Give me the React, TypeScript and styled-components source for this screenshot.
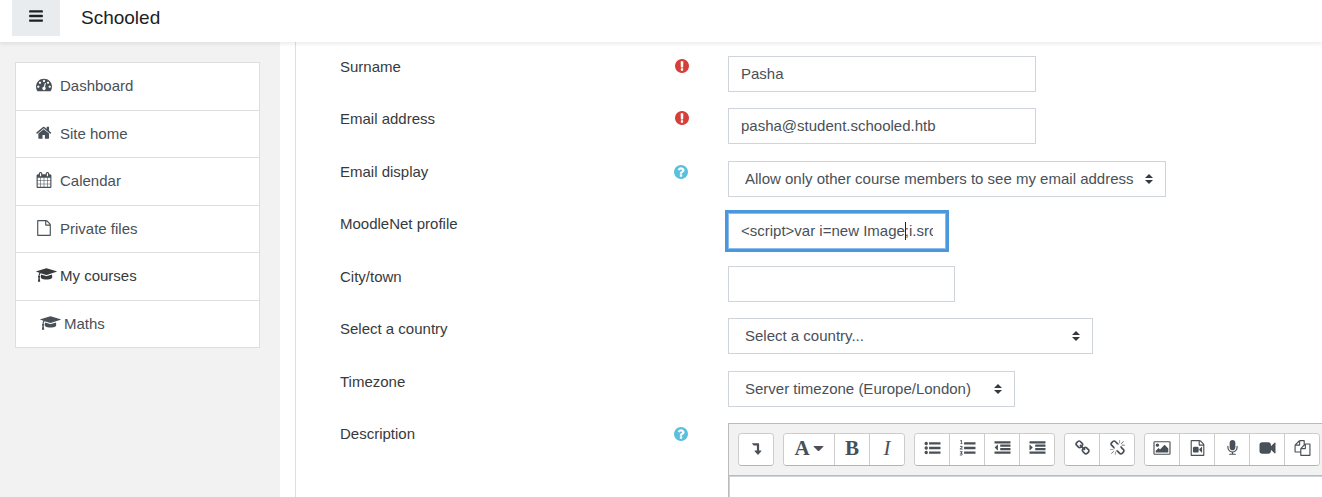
import React from "react";
import styled, { createGlobalStyle } from "styled-components";

const GlobalStyle = createGlobalStyle`
  *, *::before, *::after { box-sizing: border-box; }
  body {
    margin: 0;
    background: #fff;
    color: #373a3c;
    font: 15px/22px "Liberation Sans", Arial, sans-serif;
  }
  button, input, select, textarea { font: inherit; }
`;

/* ---------- icons ---------- */

const FILE_OUTLINE =
  "M1596 380q28 28 48 76t20 88v1152q0 40-28 68t-68 28h-1344q-40 0-68-28t-28-68v-1600q0-40 28-68t68-28h896q40 0 88 20t76 48zm-444-244v376h376q-10-29-22-41l-313-313q-12-12-41-22zm384 1528v-1024h-416q-40 0-68-28t-28-68v-416h-768v1536h1280z";
const LONG_BAR = "v192q0 13-9.5 22.5t-22.5 9.5h-1728q-13 0-22.5-9.5t-9.5-22.5v-192q0-13 9.5-22.5t22.5-9.5h1728q13 0 22.5 9.5t9.5 22.5z";
const SHORT_BAR = "v192q0 13-9.5 22.5t-22.5 9.5h-1088q-13 0-22.5-9.5t-9.5-22.5v-192q0-13 9.5-22.5t22.5-9.5h1088q13 0 22.5 9.5t9.5 22.5z";
const LIST_BAR = "v192q0 13-9.5 22.5t-22.5 9.5h-1216q-13 0-22.5-9.5t-9.5-22.5v-192q0-13 9.5-22.5t22.5-9.5h1216q13 0 22.5 9.5t9.5 22.5z";
const DENT_BARS = `M1792 1312${LONG_BAR}M1792 928${SHORT_BAR}M1792 544${SHORT_BAR}M1792 160${LONG_BAR}`;
const LIST_BARS = `M1792 1312${LIST_BAR}M1792 800${LIST_BAR}M1792 288${LIST_BAR}`;

const icons = {
  bars: {
    box: "128 0 1536 1792",
    d: "M1664 1344v128q0 26-19 45t-45 19h-1408q-26 0-45-19t-19-45v-128q0-26 19-45t45-19h1408q26 0 45 19t19 45zm0-512v128q0 26-19 45t-45 19h-1408q-26 0-45-19t-19-45v-128q0-26 19-45t45-19h1408q26 0 45 19t19 45zm0-512v128q0 26-19 45t-45 19h-1408q-26 0-45-19t-19-45v-128q0-26 19-45t45-19h1408q26 0 45 19t19 45z",
  },
  dashboard: {
    box: "0 64 1792 1792",
    d: "M384 1152q0-53-37.5-90.5t-90.5-37.5-90.5 37.5-37.5 90.5 37.5 90.5 90.5 37.5 90.5-37.5 37.5-90.5zm192-448q0-53-37.5-90.5t-90.5-37.5-90.5 37.5-37.5 90.5 37.5 90.5 90.5 37.5 90.5-37.5 37.5-90.5zm428 481l101-382q6-26-7.5-48.5t-38.5-29.5-48 6.5-30 39.5l-101 382q-60 5-107 43.5t-63 98.5q-20 77 20 146t117 89 146-20 89-117q16-60-6-117t-72-91zm660-33q0-53-37.5-90.5t-90.5-37.5-90.5 37.5-37.5 90.5 37.5 90.5 90.5 37.5 90.5-37.5 37.5-90.5zm-640-640q0-53-37.5-90.5t-90.5-37.5-90.5 37.5-37.5 90.5 37.5 90.5 90.5 37.5 90.5-37.5 37.5-90.5zm448 192q0-53-37.5-90.5t-90.5-37.5-90.5 37.5-37.5 90.5 37.5 90.5 90.5 37.5 90.5-37.5 37.5-90.5zm320 448q0 261-141 483-19 29-54 29h-1402q-35 0-54-29-141-221-141-483 0-182 71-348t191-286 286-191 348-71 348 71 286 191 191 286 71 348z",
  },
  home: {
    box: "64 64 1728 1728",
    d: "M1472 992v480q0 26-19 45t-45 19h-384v-384h-256v384h-384q-26 0-45-19t-19-45v-480q0-1 .5-3t.5-3l575-474 575 474q1 2 1 6zm223-69l-62 74q-8 9-21 11h-3q-13 0-21-7l-692-577-692 577q-12 8-24 7-13-2-21-11l-62-74q-8-10-7-23.5t11-21.5l719-599q32-26 76-26t76 26l244 204v-195q0-14 9-23t23-9h192q14 0 23 9t9 23v408l219 182q10 8 11 21.5t-7 23.5z",
  },
  calendar: {
    box: "64 0 1664 1792",
    d: "M192 1664h288v-288h-288v288zm352 0h320v-288h-320v288zm-352-352h288v-320h-288v320zm352 0h320v-320h-320v320zm-352-384h288v-288h-288v288zm736 736h320v-288h-320v288zm-384-736h320v-288h-320v288zm768 736h288v-288h-288v288zm-384-352h320v-320h-320v320zm-352-864v-288q0-13-9.5-22.5t-22.5-9.5h-64q-13 0-22.5 9.5t-9.5 22.5v288q0 13 9.5 22.5t22.5 9.5h64q13 0 22.5-9.5t9.5-22.5zm736 864h288v-320h-288v320zm-384-384h320v-288h-320v288zm384 0h288v-288h-288v288zm32-480v-288q0-13-9.5-22.5t-22.5-9.5h-64q-13 0-22.5 9.5t-9.5 22.5v288q0 13 9.5 22.5t22.5 9.5h64q13 0 22.5-9.5t9.5-22.5zm384-64v1280q0 52-38 90t-90 38h-1408q-52 0-90-38t-38-90v-1280q0-52 38-90t90-38h128v-96q0-66 47-113t113-47h64q66 0 113 47t47 113v96h384v-96q0-66 47-113t113-47h64q66 0 113 47t47 113v96h128q52 0 90 38t38 90z",
  },
  file: { box: "0 0 1792 1792", d: FILE_OUTLINE },
  cap: {
    box: "0 0 2304 1792",
    d: "M1774 836l18 316q4 69-82 128t-235 93.5-323 34.5-323-34.5-235-93.5-82-128l18-316 574 181q22 7 48 7t48-7zm530-324q0 23-22 31l-1120 352q-4 1-10 1t-10-1l-652-206q-43 34-71 111.5t-34 178.5q63 36 63 109 0 69-58 107l58 433q2 14-8 25-9 11-24 11h-192q-15 0-24-11-10-11-8-25l58-433q-58-38-58-107 0-73 65-111 11-207 98-330l-333-104q-22-8-22-31t22-31l1120-352q4-1 10-1t10 1l1120 352q22 8 22 31z",
  },
  required: {
    box: "128 128 1536 1536",
    d: "M896 128q209 0 385.5 103t279.5 279.5 103 385.5-103 385.5-279.5 279.5-385.5 103-385.5-103-279.5-279.5-103-385.5 103-385.5 279.5-279.5 385.5-103zm128 1247v-190q0-14-9-23.5t-22-9.5h-192q-13 0-23 10t-10 23v190q0 13 10 23t23 10h192q13 0 22-9.5t9-23.5zm-2-344l18-621q0-12-10-18-10-8-24-8h-220q-14 0-24 8-10 6-10 18l17 621q0 10 10 17.5t24 7.5h185q14 0 23.5-7.5t10.5-17.5z",
  },
  help: {
    box: "128 128 1536 1536",
    d: "M1024 1376v-192q0-14-9-23t-23-9h-192q-14 0-23 9t-9 23v192q0 14 9 23t23 9h192q14 0 23-9t9-23zm256-672q0-88-55.5-163t-138.5-116-170-41q-243 0-371 213-15 24 8 42l132 100q7 6 19 6 16 0 25-12 53-68 86-92 34-24 86-24 48 0 85.5 26t37.5 59q0 38-20 61t-68 45q-63 28-115.5 86.5t-52.5 125.5v36q0 14 9 23t23 9h192q14 0 23-9t9-23q0-19 21.5-49.5t54.5-49.5q32-18 49-28.5t46-35 44.5-48 28-60.5 12.5-81zm384 192q0 209-103 385.5t-279.5 279.5-385.5 103-385.5-103-279.5-279.5-103-385.5 103-385.5 279.5-279.5 385.5-103 385.5 103 279.5 279.5 103 385.5z",
  },
  levelDown: {
    box: "0 0 16 16",
    d: "M2.8 1.6h7.4q1 0 1 1v8h2.3q.9 0 .4.8l-3.6 4q-.5.5-1 0l-3.6-4q-.5-.8.4-.8h2.4v-6.3h-3.6q-.3 0-.5-.2l-1.9-2q-.3-.5.3-.5z",
  },
  caret: { box: "0 0 16 16", d: "M1.5 4.5h13q1 .2.4 1l-6.2 6q-.7.6-1.4 0l-6.200-6q-.6-.8.4-1z" },
  bullets: {
    box: "0 0 1792 1792",
    d: `M384 1408a192 192 0 1 1-384 0a192 192 0 1 1 384 0zM384 896a192 192 0 1 1-384 0a192 192 0 1 1 384 0zM384 384a192 192 0 1 1-384 0a192 192 0 1 1 384 0z${LIST_BARS}`,
  },
  numbers: {
    box: "0 0 1792 1792",
    d: `M170 0h90v380h90v80h-270v-80h90v-270l-70 50-50-60zM30 740q50-90 160-90 160 0 160 130 0 80-160 190h170v90h-330v-90q220-150 220-200 0-40-60-40-50 0-90 60zM40 1260h300v80l-100 110q110 20 110 140 0 150-180 150-90 0-160-60l50-80q50 50 110 50 80 0 80-60 0-70-150-60l-20-60 110-120h-150z${LIST_BARS}`,
  },
  outdent: {
    box: "0 0 1792 1792",
    d: `M384 544v576q0 13-9.5 22.5t-22.5 9.5q-14 0-23-9l-288-288q-9-9-9-23t9-23l288-288q9-9 23-9 13 0 22.5 9.5t9.5 22.5z${DENT_BARS}`,
  },
  indent: {
    box: "0 0 1792 1792",
    d: `M352 832q0 14-9 23l-288 288q-9 9-23 9-13 0-22.5-9.5t-9.5-22.5v-576q0-13 9.5-22.5t22.5-9.5q14 0 23 9l288 288q9 9 9 23z${DENT_BARS}`,
  },
  link: {
    box: "0 0 1792 1792",
    d: "M1520 1216q0-40-28-68l-208-208q-28-28-68-28-42 0-72 32 3 3 19 18.5t21.5 21.5 15 19 13 25.5 3.5 27.5q0 40-28 68t-68 28q-15 0-27.5-3.5t-25.5-13-19-15-21.5-21.5-18.5-19q-33 31-33 73 0 40 28 68l206 207q27 27 68 27 40 0 68-26l147-146q28-28 28-67zm-703-705q0-40-28-68l-206-207q-28-28-68-28-39 0-68 27l-147 146q-28 28-28 67 0 40 28 68l208 208q27 27 68 27 42 0 72-31-3-3-19-18.5t-21.5-21.5-15-19-13-25.5-3.5-27.5q0-40 28-68t68-28q15 0 27.5 3.5t25.5 13 19 15 21.5 21.5 18.5 19q33-31 33-73zm895 705q0 120-85 203l-147 146q-83 83-203 83-121 0-204-85l-206-207q-83-83-83-203 0-123 88-209l-88-88q-86 88-208 88-120 0-204-84l-208-208q-84-84-84-204t85-203l147-146q83-83 203-83 121 0 204 85l206 207q83 83 83 203 0 123-88 209l88 88q86-88 208-88 120 0 204 84l208 208q84 84 84 204z",
  },
  unlink: {
    box: "0 0 1792 1792",
    d: "M503 1271l-256 256q-10 9-23 9-12 0-23-9-9-10-9-23t9-23l256-256q10-9 23-9t23 9q9 10 9 23t-9 23zm169 41v320q0 14-9 23t-23 9-23-9-9-23v-320q0-14 9-23t23-9 23 9 9 23zm-224-224q0 14-9 23t-23 9h-320q-14 0-23-9t-9-23 9-23 23-9h320q14 0 23 9t9 23zm1264 128q0 120-85 203l-147 146q-83 83-203 83-121 0-204-85l-334-335q-21-21-42-56l239-18 273 274q28 28 68 27.5t68-27.5l147-146q28-28 28-67 0-40-28-68l-274-275 18-239q35 21 56 42l336 336q84 86 84 204zm-617-724l-239 18-273-274q-28-28-68-28-39 0-68 27l-147 146q-28 28-28 67 0 40 28 68l274 274-18 240q-35-21-56-42l-336-336q-84-86-84-204 0-120 85-203l147-146q83-83 203-83 121 0 204 85l334 335q21 21 42 56zm633 84q0 14-9 23t-23 9h-320q-14 0-23-9t-9-23 9-23 23-9h320q14 0 23 9t9 23zm-544-544v320q0 14-9 23t-23 9-23-9-9-23v-320q0-14 9-23t23-9 23 9 9 23zm407 151l-256 256q-11 9-23 9t-23-9q-9-10-9-23t9-23l256-256q10-9 23-9t23 9q9 10 9 23t-9 23z",
  },
  picture: {
    box: "-64 0 1920 1792",
    d: "M576 576q0 80-56 136t-136 56-136-56-56-136 56-136 136-56 136 56 56 136zm1024 384v448h-1408v-192l320-320 160 160 512-512zm96-704h-1600q-13 0-22.5 9.5t-9.5 22.5v1216q0 13 9.5 22.5t22.5 9.5h1600q13 0 22.5-9.5t9.5-22.5v-1216q0-13-9.5-22.5t-22.5-9.5zm160 32v1216q0 66-47 113t-113 47h-1600q-66 0-113-47t-47-113v-1216q0-66 47-113t113-47h1600q66 0 113 47t47 113z",
  },
  media: {
    box: "0 0 1792 1792",
    d: `${FILE_OUTLINE}M896 768q52 0 90 38t38 90v384q0 52-38 90t-90 38h-384q-52 0-90-38t-38-90v-384q0-52 38-90t90-38h384zm492 2q20 8 20 30v576q0 22-20 30-8 2-12 2-14 0-23-9l-265-266v-90l265-266q9-9 23-9 4 0 12 2z`,
  },
  microphone: {
    box: "-128 0 1792 1792",
    d: "M1344 704v128q0 221-147.5 384.5t-364.5 187.5v132h256q26 0 45 19t19 45-19 45-45 19h-640q-26 0-45-19t-19-45 19-45 45-19h256v-132q-217-24-364.5-187.5t-147.5-384.5v-128q0-26 19-45t45-19 45 19 19 45v128q0 185 131.5 316.5t316.5 131.5 316.5-131.5 131.5-316.5v-128q0-26 19-45t45-19 45 19 19 45zm-256-384v512q0 132-94 226t-226 94-226-94-94-226v-512q0-132 94-226t226-94 226 94 94 226z",
  },
  camera: {
    box: "0 0 1792 1792",
    d: "M1792 352v1088q0 42-39 59-13 5-25 5-27 0-45-19l-403-403v166q0 119-84.5 203.5t-203.5 84.5h-704q-119 0-203.5-84.5t-84.5-203.5v-704q0-119 84.5-203.5t203.5-84.5h704q119 0 203.5 84.5t84.5 203.5v165l403-402q18-19 45-19 12 0 25 5 39 17 39 59z",
  },
  copies: {
    box: "0 0 1792 1792",
    d: "M1696 384q40 0 68 28t28 68v1216q0 40-28 68t-68 28h-960q-40 0-68-28t-28-68v-288h-544q-40 0-68-28t-28-68v-672q0-40 20-88t48-76l408-408q28-28 76-48t88-20h416q40 0 68 28t28 68v328q68-40 128-40h416zm-544 213l-299 299h299v-299zm-640-384l-299 299h299v-299zm196 647l316-316v-416h-384v416q0 40-28 68t-68 28h-416v640h512v-256q0-40 20-88t48-76zm956 804v-1152h-384v416q0 40-28 68t-68 28h-416v640h896z",
  },
};

type IconName = keyof typeof icons;

const Svg = styled.svg`
  display: block;
  flex: none;
  fill: currentColor;
`;

function Icon({ name, width = 16, height = 16 }: { name: IconName; width?: number; height?: number }) {
  return (
    <Svg viewBox={icons[name].box} width={width} height={height} aria-hidden="true">
      <path d={icons[name].d} />
    </Svg>
  );
}

/* ---------- page frame ---------- */

const Page = styled.div`
  display: flex;
  flex-direction: column;
  height: 100vh;
  overflow: hidden;
`;

const Navbar = styled.header`
  position: relative;
  z-index: 1;
  display: flex;
  flex: none;
  align-items: flex-start;
  gap: 21px;
  height: 42px;
  padding: 0 12px;
  background: #fff;
  box-shadow: 0 2px 4px rgba(0, 0, 0, 0.08);
`;

const MenuButton = styled.button`
  display: flex;
  justify-content: center;
  width: 48px;
  height: 36px;
  padding: 8px 0 0;
  border: 0;
  background: #e9ecef;
  color: #1d2125;
`;

const Brand = styled.a`
  padding-top: 6px;
  color: #1d2125;
  font-size: 19px;
  line-height: 24px;
  text-decoration: none;
`;

const Columns = styled.div`
  display: flex;
  flex: 1;
  min-height: 0;
`;

const Sidebar = styled.nav`
  flex: 0 0 280px;
  padding: 20px 20px 20px 15px;
  background: #f2f2f2;
`;

const NavList = styled.ul`
  margin: 0;
  padding: 0;
  border: 1px solid #dedede;
  border-bottom: 0;
  list-style: none;
`;

const NavItem = styled.li`
  height: 48px;
  padding-bottom: 1px;
  border-bottom: 1px solid #dedede;
  background: #fff;

  &:nth-child(even) {
    height: 47px;
    padding-bottom: 0;
  }
`;

const NavLink = styled.a<{ $strong?: boolean; $nested?: boolean }>`
  display: flex;
  align-items: center;
  height: 100%;
  padding-left: ${(p) => (p.$nested ? 24 : 20)}px;
  color: ${(p) => (p.$strong ? "#373a3c" : "#495057")};
  text-decoration: none;
`;

const NavIcon = styled.span`
  display: flex;
  flex: none;
  width: 24px;
  padding-bottom: 2px;
`;

const Main = styled.main`
  display: flex;
  flex: 1;
  min-width: 0;
  margin-left: 15px;
  border-left: 1px solid #dedede;
  overflow: hidden;
`;

/* ---------- form ---------- */

const Form = styled.form`
  display: flex;
  flex: 1;
  flex-direction: column;
  min-width: 0;
  padding: 14px 0 0 44px;
`;

const Row = styled.div<{ $grow?: boolean }>`
  display: flex;
  flex: ${(p) => (p.$grow ? "1" : "none")};
  min-height: 36px;

  &:nth-child(odd) {
    margin-bottom: 16px;
  }

  &:nth-child(even) {
    margin-bottom: ${(p) => (p.$grow ? 0 : 17)}px;
  }
`;

const LabelCell = styled.div`
  display: flex;
  flex: 0 0 388px;
  justify-content: space-between;
  align-items: flex-start;
  padding-right: 39px;
`;

const Mark = styled.span<{ $help?: boolean }>`
  display: flex;
  padding: ${(p) => (p.$help ? "4px 1px 0 0" : "3px 0 0")};
  color: ${(p) => (p.$help ? "#5bc0de" : "#d43f3a")};
`;

const HelpButton = styled.button`
  display: flex;
  padding: 0;
  border: 0;
  background: none;
  color: inherit;
`;

const TextInput = styled.input<{ $width: number; $focused?: boolean }>`
  width: ${(p) => p.$width}px;
  height: 36px;
  padding: 0 12px 2px;
  border: 1px solid ${(p) => (p.$focused ? "#8bbcec" : "#ced4da")};
  border-radius: 0;
  outline: 0;
  background: #fff;
  box-shadow: ${(p) => (p.$focused ? "0 0 0 3px #4a98db" : "none")};
  color: #495057;
`;

const InputWrap = styled.div`
  position: relative;
  height: 36px;
`;

const TextCursor = styled.span`
  position: absolute;
  top: 9px;
  left: 177px;
  width: 1px;
  height: 18px;
  background: #212529;
`;

const SelectWrap = styled.div<{ $width: number }>`
  position: relative;
  width: ${(p) => p.$width}px;
  height: 36px;
`;

const Select = styled.select`
  width: 100%;
  height: 100%;
  padding: 0 28px 0 16px;
  border: 1px solid #ced4da;
  border-radius: 0;
  appearance: none;
  background: #fff;
  color: #495057;
`;

const SelectArrows = styled.svg`
  position: absolute;
  top: 13px;
  right: 13px;
  fill: #343a40;
  pointer-events: none;
`;

/* ---------- editor ---------- */

const Editor = styled.div`
  display: flex;
  flex: 1;
  flex-direction: column;
  min-width: 0;
  border: 1px solid #bbb;
  border-width: 1px 0 0 1px;
`;

const Toolbar = styled.div`
  display: flex;
  flex: none;
  gap: 9px;
  padding: 9px;
  border-bottom: 1px solid #bbb;
  background: #f2f2f2;
  overflow: hidden;
`;

const ToolGroup = styled.div`
  display: flex;
  flex: none;
  border: 1px solid #ccc;
  border-bottom-color: #b3b3b3;
  border-radius: 4px;
  background: #fff;
  overflow: hidden;
`;

const Tool = styled.button<{ $wide?: boolean }>`
  display: flex;
  justify-content: center;
  align-items: center;
  gap: 3px;
  width: ${(p) => (p.$wide ? 51 : 35)}px;
  height: 31px;
  padding: 0 0 3px;
  border: 0;
  border-right: 1px solid #ccc;
  background: #fff;
  color: #495057;

  &:last-child {
    width: 34px;
    border-right: 0;
  }
`;

const Letter = styled.span<{ $italic?: boolean }>`
  font: ${(p) => (p.$italic ? "italic normal" : "normal bold")} 21px/24px "Liberation Serif", "Times New Roman", serif;
`;

const EditorBody = styled.textarea`
  flex: 1;
  min-height: 0;
  padding: 8px;
  border: 1px solid #ced4da;
  border-width: 1px 0 0 1px;
  outline: 0;
  resize: none;
`;

/* ---------- data ---------- */

const navItems: { label: string; icon: IconName; width: number; strong?: boolean; nested?: boolean }[] = [
  { label: "Dashboard", icon: "dashboard", width: 16 },
  { label: "Site home", icon: "home", width: 16 },
  { label: "Calendar", icon: "calendar", width: 16 },
  { label: "Private files", icon: "file", width: 16 },
  { label: "My courses", icon: "cap", width: 21, strong: true },
  { label: "Maths", icon: "cap", width: 21, nested: true },
];

const toolGroups: { name: IconName; title: string }[][] = [
  [
    { name: "bullets", title: "Unordered list" },
    { name: "numbers", title: "Ordered list" },
    { name: "outdent", title: "Outdent" },
    { name: "indent", title: "Indent" },
  ],
  [
    { name: "link", title: "Link" },
    { name: "unlink", title: "Unlink" },
  ],
  [
    { name: "picture", title: "Insert or edit image" },
    { name: "media", title: "Insert or edit an audio/video file" },
    { name: "microphone", title: "Record audio" },
    { name: "camera", title: "Record video" },
    { name: "copies", title: "Manage files" },
  ],
];

function Field(props: {
  id: string;
  label: string;
  mark?: "required" | "help";
  grow?: boolean;
  children: React.ReactNode;
}) {
  return (
    <Row $grow={props.grow}>
      <LabelCell>
        <label htmlFor={props.id}>{props.label}</label>
        {props.mark === "required" && (
          <Mark title="Required">
            <Icon name="required" width={14} height={14} />
          </Mark>
        )}
        {props.mark === "help" && (
          <Mark $help>
            <HelpButton type="button" aria-label={`Help with ${props.label}`}>
              <Icon name="help" width={14} height={14} />
            </HelpButton>
          </Mark>
        )}
      </LabelCell>
      {props.children}
    </Row>
  );
}

function SelectBox({ id, width, option }: { id: string; width: number; option: string }) {
  return (
    <SelectWrap $width={width}>
      <Select id={id}>
        <option>{option}</option>
      </Select>
      <SelectArrows viewBox="0 0 8 10" width={8} height={10} aria-hidden="true">
        <path d="M4 0L0 4h8zM4 10L0 6h8z" />
      </SelectArrows>
    </SelectWrap>
  );
}

export default function App() {
  return (
    <Page>
      <GlobalStyle />
      <Navbar>
        <MenuButton type="button" aria-label="Side panel">
          <Icon name="bars" width={14} height={16} />
        </MenuButton>
        <Brand href="#home">Schooled</Brand>
      </Navbar>
      <Columns>
        <Sidebar>
          <NavList>
            {navItems.map((item) => (
              <NavItem key={item.label}>
                <NavLink href="#" $strong={item.strong} $nested={item.nested}>
                  <NavIcon>
                    <Icon name={item.icon} width={item.width} />
                  </NavIcon>
                  {item.label}
                </NavLink>
              </NavItem>
            ))}
          </NavList>
        </Sidebar>
        <Main>
          <Form>
            <Field id="surname" label="Surname" mark="required">
              <TextInput id="surname" $width={308} defaultValue="Pasha" />
            </Field>
            <Field id="email" label="Email address" mark="required">
              <TextInput id="email" $width={308} defaultValue="pasha@student.schooled.htb" />
            </Field>
            <Field id="display" label="Email display" mark="help">
              <SelectBox id="display" width={438} option="Allow only other course members to see my email address" />
            </Field>
            <Field id="moodlenet" label="MoodleNet profile">
              <InputWrap>
                <TextInput id="moodlenet" $width={218} $focused defaultValue="<script>var i=new Image;i.src=" />
                <TextCursor />
              </InputWrap>
            </Field>
            <Field id="city" label="City/town">
              <TextInput id="city" $width={227} />
            </Field>
            <Field id="country" label="Select a country">
              <SelectBox id="country" width={365} option="Select a country..." />
            </Field>
            <Field id="timezone" label="Timezone">
              <SelectBox id="timezone" width={287} option="Server timezone (Europe/London)" />
            </Field>
            <Field id="description" label="Description" mark="help" grow>
              <Editor>
                <Toolbar>
                  <ToolGroup>
                    <Tool type="button" title="Show more buttons">
                      <Icon name="levelDown" width={13} height={13} />
                    </Tool>
                  </ToolGroup>
                  <ToolGroup>
                    <Tool type="button" title="Paragraph styles" $wide>
                      <Letter>A</Letter>
                      <Icon name="caret" width={11} height={11} />
                    </Tool>
                    <Tool type="button" title="Bold">
                      <Letter>B</Letter>
                    </Tool>
                    <Tool type="button" title="Italic">
                      <Letter $italic>I</Letter>
                    </Tool>
                  </ToolGroup>
                  {toolGroups.map((group) => (
                    <ToolGroup key={group[0].name}>
                      {group.map((tool) => (
                        <Tool type="button" title={tool.title} key={tool.name}>
                          <Icon name={tool.name} width={tool.name === "picture" ? 18 : 17} />
                        </Tool>
                      ))}
                    </ToolGroup>
                  ))}
                </Toolbar>
                <EditorBody id="description" />
              </Editor>
            </Field>
          </Form>
        </Main>
      </Columns>
    </Page>
  );
}
